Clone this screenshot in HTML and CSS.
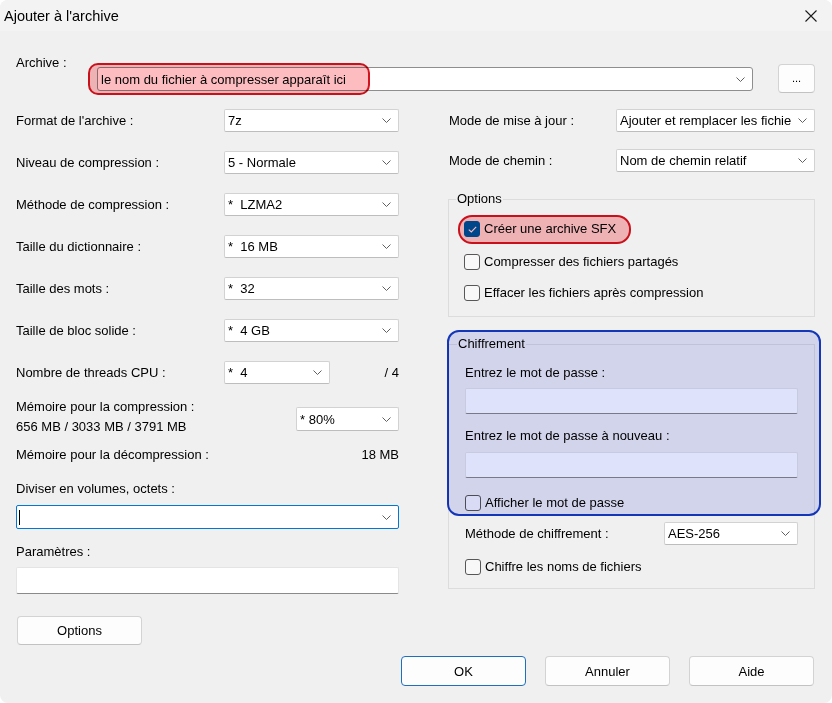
FILE: index.html
```html
<!DOCTYPE html>
<html lang="fr">
<head>
<meta charset="utf-8">
<title>Ajouter à l'archive</title>
<link rel="stylesheet" href="styles.css">
</head>
<body>
<div class="window">
  <div class="titlebar">
    <span class="title">Ajouter à l'archive</span>
    <svg class="close" width="14" height="14" viewBox="0 0 14 14"><path d="M1.5 1.5 L12.5 12.5 M12.5 1.5 L1.5 12.5" stroke="#1b1b1b" stroke-width="1.1" fill="none"/></svg>
  </div>
  <div class="content">
    <div class="archive-row">
      <span class="lbl archive-lbl">Archive :</span>
      <div class="combo archive-combo">
        <span class="val">le nom du fichier à compresser apparaît ici</span>
        <svg class="chev" width="9" height="5" viewBox="0 0 9 5"><path d="M0.5 0.5 L4.5 4.5 L8.5 0.5" fill="none" stroke="#606060" stroke-width="1"/></svg>
        <span class="hl hl-red hl-archive"></span>
      </div>
      <button class="btn browse">...</button>
    </div>

    <div class="columns">
      <div class="col-left">
        <div class="field">
          <span class="lbl">Format de l'archive :</span>
          <div class="combo"><span class="val">7z</span><svg class="chev" width="9" height="5" viewBox="0 0 9 5"><path d="M0.5 0.5 L4.5 4.5 L8.5 0.5" fill="none" stroke="#606060" stroke-width="1"/></svg></div>
        </div>
        <div class="field">
          <span class="lbl">Niveau de compression :</span>
          <div class="combo"><span class="val">5 - Normale</span><svg class="chev" width="9" height="5" viewBox="0 0 9 5"><path d="M0.5 0.5 L4.5 4.5 L8.5 0.5" fill="none" stroke="#606060" stroke-width="1"/></svg></div>
        </div>
        <div class="field">
          <span class="lbl">Méthode de compression :</span>
          <div class="combo"><span class="val">*&nbsp; LZMA2</span><svg class="chev" width="9" height="5" viewBox="0 0 9 5"><path d="M0.5 0.5 L4.5 4.5 L8.5 0.5" fill="none" stroke="#606060" stroke-width="1"/></svg></div>
        </div>
        <div class="field">
          <span class="lbl">Taille du dictionnaire :</span>
          <div class="combo"><span class="val">*&nbsp; 16 MB</span><svg class="chev" width="9" height="5" viewBox="0 0 9 5"><path d="M0.5 0.5 L4.5 4.5 L8.5 0.5" fill="none" stroke="#606060" stroke-width="1"/></svg></div>
        </div>
        <div class="field">
          <span class="lbl">Taille des mots :</span>
          <div class="combo"><span class="val">*&nbsp; 32</span><svg class="chev" width="9" height="5" viewBox="0 0 9 5"><path d="M0.5 0.5 L4.5 4.5 L8.5 0.5" fill="none" stroke="#606060" stroke-width="1"/></svg></div>
        </div>
        <div class="field">
          <span class="lbl">Taille de bloc solide :</span>
          <div class="combo"><span class="val">*&nbsp; 4 GB</span><svg class="chev" width="9" height="5" viewBox="0 0 9 5"><path d="M0.5 0.5 L4.5 4.5 L8.5 0.5" fill="none" stroke="#606060" stroke-width="1"/></svg></div>
        </div>
        <div class="field field-threads">
          <span class="lbl">Nombre de threads CPU :</span>
          <div class="combo"><span class="val">*&nbsp; 4</span><svg class="chev" width="9" height="5" viewBox="0 0 9 5"><path d="M0.5 0.5 L4.5 4.5 L8.5 0.5" fill="none" stroke="#606060" stroke-width="1"/></svg></div>
          <span class="suffix">/ 4</span>
        </div>

        <div class="mem-comp">
          <div class="mem-lines">
            <span class="lbl">Mémoire pour la compression :</span>
            <span class="lbl second">656 MB / 3033 MB / 3791 MB</span>
          </div>
          <div class="combo combo-mem"><span class="val">* 80%</span><svg class="chev" width="9" height="5" viewBox="0 0 9 5"><path d="M0.5 0.5 L4.5 4.5 L8.5 0.5" fill="none" stroke="#606060" stroke-width="1"/></svg></div>
        </div>

        <div class="mem-decomp">
          <span class="lbl">Mémoire pour la décompression :</span>
          <span class="lbl">18 MB</span>
        </div>

        <div class="lbl split-lbl">Diviser en volumes, octets :</div>
        <div class="combo combo-split"><span class="caret"></span><svg class="chev" width="9" height="5" viewBox="0 0 9 5"><path d="M0.5 0.5 L4.5 4.5 L8.5 0.5" fill="none" stroke="#606060" stroke-width="1"/></svg></div>

        <div class="lbl params-lbl">Paramètres :</div>
        <div class="textbox params-box"></div>

        <button class="btn btn-options">Options</button>
      </div>

      <div class="col-right">
        <div class="rfield">
          <span class="lbl">Mode de mise à jour :</span>
          <div class="combo"><span class="val clip">Ajouter et remplacer les fichie</span><svg class="chev" width="9" height="5" viewBox="0 0 9 5"><path d="M0.5 0.5 L4.5 4.5 L8.5 0.5" fill="none" stroke="#606060" stroke-width="1"/></svg></div>
        </div>
        <div class="rfield rfield-path">
          <span class="lbl">Mode de chemin :</span>
          <div class="combo"><span class="val">Nom de chemin relatif</span><svg class="chev" width="9" height="5" viewBox="0 0 9 5"><path d="M0.5 0.5 L4.5 4.5 L8.5 0.5" fill="none" stroke="#606060" stroke-width="1"/></svg></div>
        </div>

        <fieldset class="group group-options">
          <legend>Options</legend>
          <div class="check first">
            <span class="box checked"><svg width="9" height="7" viewBox="0 0 9 7"><path d="M0.8 3.6 L3.3 6 L8.2 0.9" fill="none" stroke="#ffffff" stroke-width="1.1"/></svg></span>
            <span class="lbl">Créer une archive SFX</span>
            <span class="hl hl-red hl-sfx"></span>
          </div>
          <div class="check second">
            <span class="box"></span>
            <span class="lbl">Compresser des fichiers partagés</span>
          </div>
          <div class="check third">
            <span class="box"></span>
            <span class="lbl">Effacer les fichiers après compression</span>
          </div>
        </fieldset>

        <fieldset class="group group-crypt">
          <legend>Chiffrement</legend>
          <div class="lbl pw-lbl">Entrez le mot de passe :</div>
          <div class="textbox pw-box"></div>
          <div class="lbl pw-lbl2">Entrez le mot de passe à nouveau :</div>
          <div class="textbox pw-box2"></div>
          <div class="check show-pw">
            <span class="box"></span>
            <span class="lbl">Afficher le mot de passe</span>
          </div>
          <div class="cfield">
            <span class="lbl">Méthode de chiffrement :</span>
            <div class="combo"><span class="val">AES-256</span><svg class="chev" width="9" height="5" viewBox="0 0 9 5"><path d="M0.5 0.5 L4.5 4.5 L8.5 0.5" fill="none" stroke="#606060" stroke-width="1"/></svg></div>
          </div>
          <div class="check names">
            <span class="box"></span>
            <span class="lbl">Chiffre les noms de fichiers</span>
          </div>
          <span class="hl hl-blue"></span>
        </fieldset>
      </div>
    </div>

    <div class="actions">
      <button class="btn btn-ok">OK</button>
      <button class="btn">Annuler</button>
      <button class="btn">Aide</button>
    </div>
  </div>
</div>
</body>
</html>
```

FILE: styles.css
```css
* { box-sizing: border-box; }

html, body {
  margin: 0;
  padding: 0;
  background: #ffffff;
}

body {
  font-family: "Liberation Sans", Arial, sans-serif;
  font-size: 13px;
  color: #000;
}

.window {
  width: 832px;
  height: 703px;
  background: #f0f0f0;
  border-radius: 8px;
  overflow: hidden;
}

.titlebar {
  height: 31px;
  background: #f3f3f3;
  display: flex;
  align-items: center;
  padding: 0 14px 0 4px;
}

.title {
  font-size: 14.5px;
  line-height: 16px;
  flex: 1;
}

.close {
  display: block;
}

.content {
  padding: 24px 17px 0 16px;
}

.lbl {
  line-height: 16px;
  white-space: nowrap;
}

/* archive row */
.archive-row {
  display: flex;
  align-items: flex-start;
}

.archive-lbl {
  width: 81px;
}

.combo {
  position: relative;
  height: 23px;
  background: #ffffff;
  border: 1px solid #d2d2d2;
  border-bottom-color: #bdbdbd;
  border-radius: 2px;
  display: flex;
  align-items: center;
  padding: 0 7px 0 3px;
}

.combo .val {
  flex: 1;
  white-space: nowrap;
  overflow: hidden;
}

.chev {
  flex: none;
  margin-left: 6px;
}

.archive-combo {
  flex: 1;
  margin-top: 12px;
  height: 24px;
  border-color: #8e8e8e;
  border-radius: 3px;
}

.btn {
  font: inherit;
  color: #000;
  background: #fdfdfd;
  border: 1px solid #d3d3d3;
  border-bottom-color: #c2c2c2;
  border-radius: 4px;
  padding: 0;
  height: 29px;
  width: 125px;
}

.browse {
  width: 37px;
  margin-left: 25px;
  margin-top: 9px;
  font-size: 11px;
  line-height: 14px;
  padding-bottom: 2px;
}

/* columns */
.columns {
  display: grid;
  grid-template-columns: 383px 1fr;
  column-gap: 49px;
  margin-top: 16px;
  height: 536px;
}

.col-left, .col-right {
  display: flex;
  flex-direction: column;
  align-items: stretch;
}

.field {
  display: grid;
  grid-template-columns: 208px 175px;
  align-items: center;
  margin-bottom: 19px;
}

.field-threads {
  grid-template-columns: 208px 106px 1fr;
  margin-bottom: 0;
}

.suffix {
  text-align: right;
  line-height: 16px;
}

.mem-comp {
  display: flex;
  justify-content: space-between;
  align-items: flex-start;
  margin-top: 15px;
}

.mem-lines {
  display: flex;
  flex-direction: column;
}

.mem-lines .second {
  margin-top: 4px;
}

.combo-mem {
  width: 103px;
  height: 24px;
  margin-top: 8px;
}

.mem-decomp {
  display: flex;
  justify-content: space-between;
  margin-top: 12px;
}

.split-lbl {
  margin-top: 18px;
}

.combo-split {
  margin-top: 8px;
  height: 24px;
  border-color: #0078d4;
  padding-left: 2px;
}

.caret {
  width: 1px;
  height: 15px;
  background: #000;
  margin-right: auto;
}

.params-lbl {
  margin-top: 15px;
}

.textbox {
  background: #ffffff;
  border: 1px solid #e4e4e4;
  border-bottom-color: #8a8a8a;
  border-radius: 2px;
  height: 27px;
}

.params-box {
  margin-top: 7px;
}

.btn-options {
  margin-top: 22px;
  margin-left: 1px;
  align-self: flex-start;
}

/* right column */
.rfield {
  display: grid;
  grid-template-columns: 168px 199px;
  align-items: center;
}

.rfield .lbl {
  padding-left: 1px;
}

.rfield-path {
  margin-top: 17px;
}

.group {
  position: relative;
  margin: 0;
  border: 1px solid #dcdcdc;
  border-radius: 0;
  min-inline-size: 0;
}

.group legend {
  line-height: 16px;
  padding: 0 1px;
  margin-left: -8px;
}

.group-options {
  margin-top: 19px;
  padding: 0 15px 15px 15px;
  height: 126px;
}

.check {
  position: relative;
  display: flex;
  align-items: center;
  height: 16px;
}

.check .lbl {
  margin-left: 4px;
}

.group-options .first { margin-top: 14px; }
.group-options .second { margin-top: 17px; }
.group-options .third { margin-top: 15px; }

.box {
  width: 16px;
  height: 16px;
  flex: none;
  border: 1px solid #575757;
  border-radius: 3px;
  background: #f8f8f8;
  display: flex;
  align-items: center;
  justify-content: center;
}

.box.checked {
  background: #005fb8;
  border-color: #005fb8;
}

.group-crypt {
  margin-top: 19px;
  padding: 0 16px 13px 16px;
  height: 253px;
}

.pw-lbl { margin-top: 13px; }
.pw-box { margin-top: 7px; height: 26px; }
.pw-lbl2 { margin-top: 14px; }
.pw-box2 { margin-top: 8px; height: 26px; }
.show-pw { margin-top: 17px; }

.cfield {
  display: grid;
  grid-template-columns: 199px 1fr;
  align-items: center;
  margin-top: 11px;
}

.cfield .combo {
  height: 23px;
}

.names { margin-top: 14px; }

.actions {
  display: flex;
  justify-content: flex-end;
  gap: 19px;
  margin-top: 11px;
  padding-right: 1px;
}

.actions .btn {
  height: 30px;
}

.btn-ok {
  border-color: #1f6fc0;
}

/* annotation highlights */
.hl {
  position: absolute;
  pointer-events: none;
  mix-blend-mode: multiply;
}

.hl-red {
  border: 2px solid #d6121c;
  background: #fdbcc0;
}

.hl-archive {
  left: -10px;
  top: -5px;
  width: 282px;
  height: 32px;
  border-radius: 10px;
}

.hl-sfx {
  left: -6px;
  top: -6px;
  width: 173px;
  height: 29px;
  border-radius: 14px;
}

.hl-blue {
  left: -2px;
  top: -22px;
  width: 374px;
  height: 186px;
  border: 2px solid #1539c4;
  border-radius: 12px;
  background: #dfe2fb;
}
```
